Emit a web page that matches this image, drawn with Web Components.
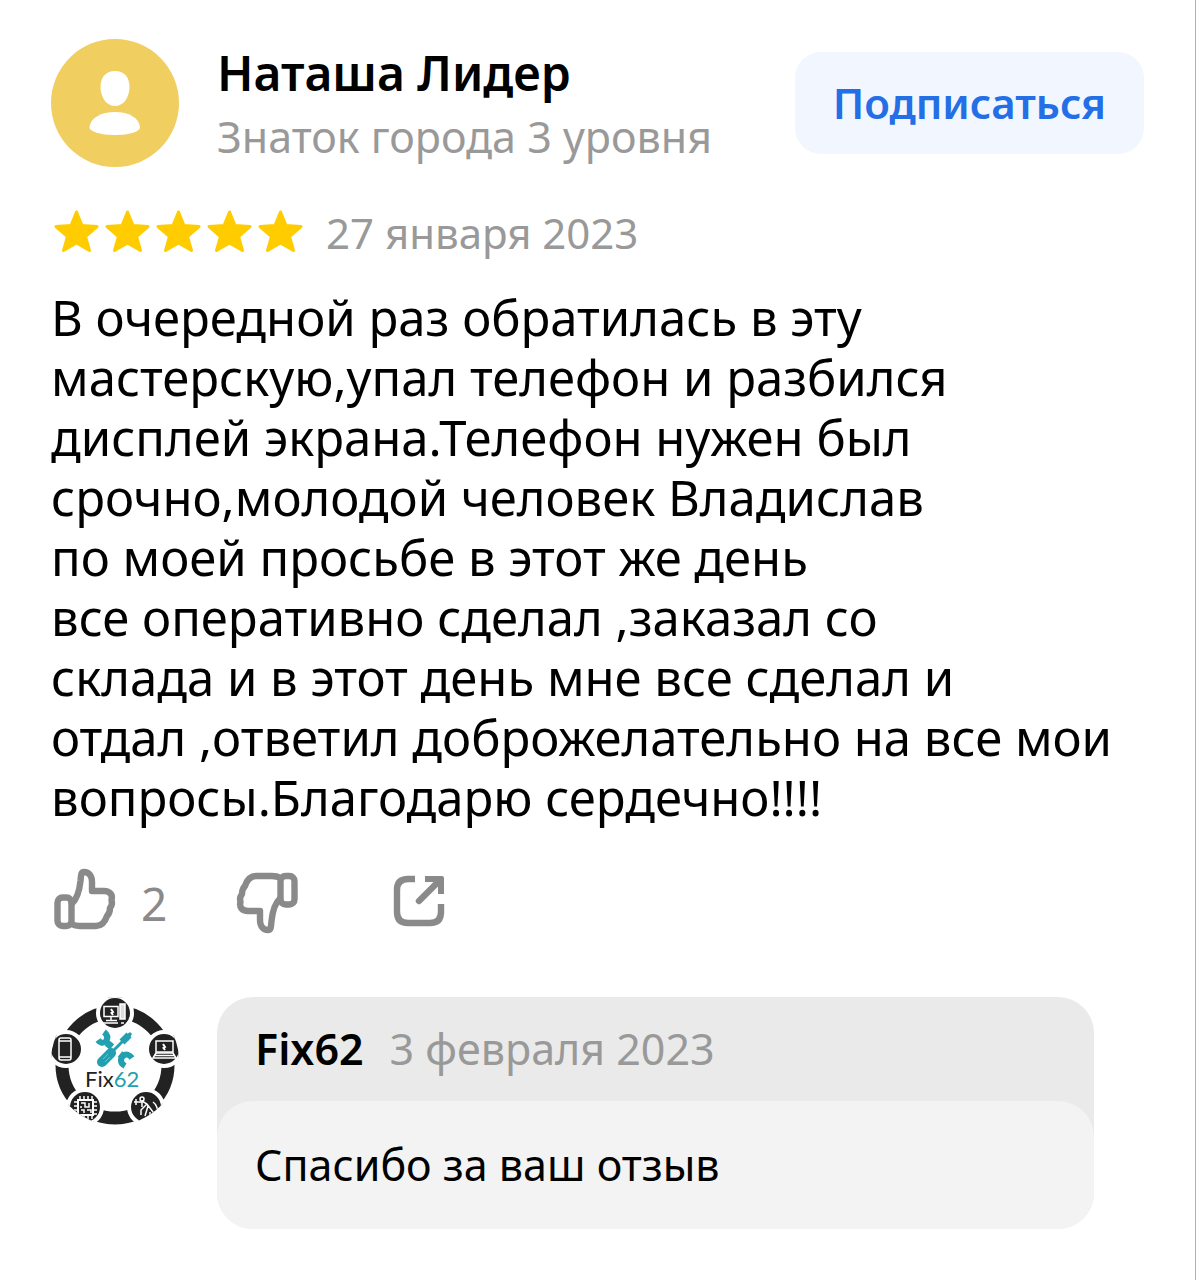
<!DOCTYPE html>
<html lang="ru">
<head>
<meta charset="utf-8">
<title>Отзыв</title>
<style>
  html { height: 100%; }
  body {
    margin: 0;
    min-height: 100%;
    box-sizing: border-box;
    background: #fff;
    color: #000;
    border-right: 1px solid #b0b0b0;
    font-family: "Noto Sans", "Open Sans", sans-serif;
  }
</style>
</head>
<body>
<review-card>
  <review-author slot="author" name="Наташа Лидер" level="Знаток города 3 уровня"></review-author>
  <star-rating slot="meta" value="5"></star-rating>
  <time slot="meta" datetime="2023-01-27">27 января 2023</time>
  <span slot="text">В очередной раз обратилась в эту<br>мастерскую,упал телефон и разбился<br>дисплей экрана.Телефон нужен был<br>срочно,молодой человек Владислав<br>по моей просьбе в этот же день<br>все оперативно сделал ,заказал со<br>склада и в этот день мне все сделал и<br>отдал ,ответил доброжелательно на все мои<br>вопросы.Благодарю сердечно!!!!</span>
  <review-actions slot="actions" likes="2"></review-actions>
  <owner-reply slot="reply" name="Fix62" date="3 февраля 2023">Спасибо за ваш отзыв</owner-reply>
</review-card>

<script>
class ReviewCard extends HTMLElement {
  constructor() {
    super();
    this.attachShadow({ mode: 'open' }).innerHTML = `
      <style>
        :host { display: block; padding: 39px 51px 50px; }
        article { display: flex; flex-direction: column; }
        .meta { display: flex; align-items: center; gap: 20px; margin-top: 36px; height: 60px;
                font-size: 42px; line-height: 60px; color: #999; }
        p { margin: 24px 0 0; font-size: 49px; line-height: 60px; white-space: nowrap; }
        .actions { margin-top: 40px; }
        .reply { margin-top: 58px; }
      </style>
      <article>
        <slot name="author"></slot>
        <div class="meta"><slot name="meta"></slot></div>
        <p><slot name="text"></slot></p>
        <div class="actions"><slot name="actions"></slot></div>
        <div class="reply"><slot name="reply"></slot></div>
      </article>`;
  }
}

class ReviewAuthor extends HTMLElement {
  connectedCallback() {
    if (this.shadowRoot) return;
    this.attachShadow({ mode: 'open' }).innerHTML = `
      <style>
        :host { display: flex; align-items: center; gap: 38px; }
        svg { display: block; width: 128px; height: 128px; flex: none; }
        .who { flex: 1; min-width: 0; display: flex; flex-direction: column; gap: 4px; padding-top: 4px;
               line-height: 60px; white-space: nowrap; }
        h2 { margin: 0; font-size: 48px; font-weight: 600; }
        .level { font-size: 43px; color: #999; }
        button { border: 0; margin: 0; padding: 0 38px; height: 102px; border-radius: 26px;
                 background: #f2f6fe; color: #246ee6; font: 600 42px/60px "Noto Sans", "Open Sans", sans-serif; }
      </style>
      <svg viewBox="0 0 128 128" aria-hidden="true">
        <circle cx="64" cy="64" r="64" fill="#f0ce60"/>
        <path d="M64 32C73 32 78.500 38 78.500 48C78.500 59 72 67 64 67S49.500 59 49.500 48C49.500 38 55 32 64 32Z" fill="#fff"/>
        <path d="M64 73C78 73 88 79 89 88C89.500 93 77 96 64 96S38 93 38.500 88C39.500 79 50 73 64 73Z" fill="#fff"/>
      </svg>
      <div class="who"><h2></h2><div class="level"></div></div>
      <button type="button">Подписаться</button>`;
    this.shadowRoot.querySelector('h2').textContent = this.getAttribute('name');
    this.shadowRoot.querySelector('.level').textContent = this.getAttribute('level');
  }
}

class StarRating extends HTMLElement {
  connectedCallback() {
    if (this.shadowRoot) return;
    const star = `<svg viewBox="0 0 51 51" aria-hidden="true"><path d="M25.500 4L31 17.500L46 18.500L34.500 28.500L38.500 42.500L25.500 35L12.500 42.500L16.500 28.500L5 18.500L20 17.500Z" fill="#fc0" stroke="#fc0" stroke-width="3" stroke-linejoin="round"/></svg>`;
    this.attachShadow({ mode: 'open' }).innerHTML = `
      <style>
        :host { display: flex; }
        svg { display: block; width: 51px; height: 51px; }
      </style>` + star.repeat(Number(this.getAttribute('value')));
  }
}

class ReviewActions extends HTMLElement {
  connectedCallback() {
    if (this.shadowRoot) return;
    const hand = `<g fill="none" stroke="#8a8a8a" stroke-width="6.400" stroke-linejoin="round" stroke-linecap="round">
      <rect x="6.500" y="30.500" width="14" height="28.500" rx="5"/>
      <path d="M21 36.500C27 31 28.500 23 29.500 14C30 8 30 5 33 5C38 5 41 9 41 15V24H53C59 24 62 28 60.500 33C61.500 36 60.500 39 59 41C59 45 58 47 56 49C54 55 51 59 45 59H29Q24 59 20.500 57"/></g>`;
    this.attachShadow({ mode: 'open' }).innerHTML = `
      <style>
        :host { display: flex; align-items: center; }
        button { display: flex; align-items: center; gap: 26px; border: 0; margin: 0; padding: 0;
                 background: none; color: #8a8a8a; font: 400 46px/68px "Noto Sans", "Open Sans", sans-serif; }
        button + button { margin-left: 66px; }
        button:last-child { margin-left: 90px; }
        svg { display: block; width: 64px; height: 72px; overflow: visible; }
      </style>
      <button type="button" aria-label="Нравится"><svg viewBox="0 0 64 72">${hand}</svg><span></span></button>
      <button type="button" aria-label="Не нравится"><svg viewBox="0 0 64 72"><g transform="rotate(180 34 34)">${hand}</g></svg></button>
      <button type="button" aria-label="Поделиться"><svg viewBox="0 0 64 72">
        <path d="M28 12H21Q10 12 10 23V45Q10 56 21 56H43Q54 56 54 45V37" fill="none" stroke="#8a8a8a" stroke-width="6.400"/>
        <path d="M32 34L50 16" fill="none" stroke="#8a8a8a" stroke-width="6.400" stroke-linecap="round"/>
        <path d="M38 9H55Q57 9 57 11V27H51V20L46 15H38Z" fill="#8a8a8a"/></svg></button>`;
    this.shadowRoot.querySelector('span').textContent = this.getAttribute('likes');
  }
}

class ShopLogo extends HTMLElement {
  constructor() {
    super();
    this.attachShadow({ mode: 'open' }).innerHTML = `
      <style>
        :host { display: block; width: 128px; height: 128px; flex: none; }
        svg { display: block; }
        text { font: 400 22px Lato, "Noto Sans", sans-serif; }
      </style>
      <svg width="128" height="128" viewBox="0 0 128 128">
        <defs><clipPath id="round"><circle cx="64" cy="64" r="64"/></clipPath></defs>
        <g clip-path="url(#round)">
          <circle cx="64" cy="68" r="53" fill="none" stroke="#222" stroke-width="13"/>
          <g fill="#222" stroke="#fff" stroke-width="4">
            <circle cx="64" cy="16" r="17"/><circle cx="15" cy="52" r="17"/><circle cx="113" cy="52" r="17"/>
            <circle cx="34" cy="110" r="17"/><circle cx="95" cy="110" r="17"/>
          </g>
          <g fill="none" stroke="#fff" stroke-width="1.500">
            <rect x="53" y="9.500" width="14" height="10"/><path d="M60 20V23M55 23.500H66M52 26H67"/>
            <rect x="69" y="7" width="5" height="15" fill="#ddd"/><path d="M70 26H73"/>
            <rect x="8" y="41" width="12" height="22" rx="2"/><path d="M8 44H20M8 60H20"/>
            <rect x="105" y="44" width="17" height="11"/><path d="M105 56L102 61H125L122 56ZM104 58.500H123"/>
            <rect x="27" y="103" width="15" height="15" stroke-width="2"/>
            <path d="M29 99V103M33 99V103M37 99V103M41 99V103M29 118V122M33 118V122M37 118V122M41 118V122M23 105H27M23 109H27M23 113H27M42 105H46M42 109H46M42 113H46M42 117H46"/>
            <path d="M30 106H34V110H38V106M30 113H33V116M36 113H40V116M30 109V111"/>
            <path d="M83 105H91V110M85 102V108M91 104L96 107L102 115L105 118M96 107L90 113V118M97 109L94 119M102 105C105 107 107 112 107 116M99 115V121"/>
            <circle cx="91" cy="102" r="2"/>
          </g>
          <path d="M60 12L62 15L60.500 16L62 18M112 47L114 50L112.500 51L114 53" stroke="#fff" stroke-width="2" fill="none"/>
          <g fill="none" stroke="#22a0b0">
            <path d="M79 37L62 54" stroke-width="3"/>
            <path d="M60 56L51 65" stroke-width="10" stroke-linecap="round"/>
            <path d="M71 45L78 38" stroke-width="7"/>
            <path d="M56 46L61 50M69 57L74 61" stroke-width="7"/>
            <path d="M53 35C57 38 57 41 55 44C52 47 49 46 47 43" stroke-width="6"/>
            <path d="M74 69C69 66 69 62 72 59C75 56 79 58 81 61" stroke-width="6"/>
            <path d="M52 62L57 57M54 65L59 60" stroke="#65c2cb" stroke-width="1"/>
          </g>
          <path d="M73 40L79 35L81 37L77 44Z" fill="#22a0b0"/>
        </g>
        <text x="34" y="90" fill="#222">Fix<tspan fill="#22a0b0">62</tspan></text>
      </svg>`;
  }
}

class OwnerReply extends HTMLElement {
  connectedCallback() {
    if (this.shadowRoot) return;
    this.attachShadow({ mode: 'open' }).innerHTML = `
      <style>
        :host { display: flex; align-items: flex-start; gap: 38px; padding-right: 50px; }
        section { flex: 1; min-width: 0; border-radius: 36px; background: #eaeaea; }
        header { display: flex; gap: 26px; padding: 22px 38px; font-size: 43px; line-height: 60px; }
        strong { font-weight: 600; }
        time { color: #999; }
        p { margin: 0; padding: 34px 38px; border-radius: 36px; background: #f3f3f3; font-size: 43px; line-height: 60px; }
      </style>
      <shop-logo></shop-logo>
      <section>
        <header><strong></strong><time></time></header>
        <p><slot></slot></p>
      </section>`;
    this.shadowRoot.querySelector('strong').textContent = this.getAttribute('name');
    this.shadowRoot.querySelector('time').textContent = this.getAttribute('date');
  }
}

customElements.define('review-card', ReviewCard);
customElements.define('review-author', ReviewAuthor);
customElements.define('star-rating', StarRating);
customElements.define('review-actions', ReviewActions);
customElements.define('shop-logo', ShopLogo);
customElements.define('owner-reply', OwnerReply);
</script>
</body>
</html>
